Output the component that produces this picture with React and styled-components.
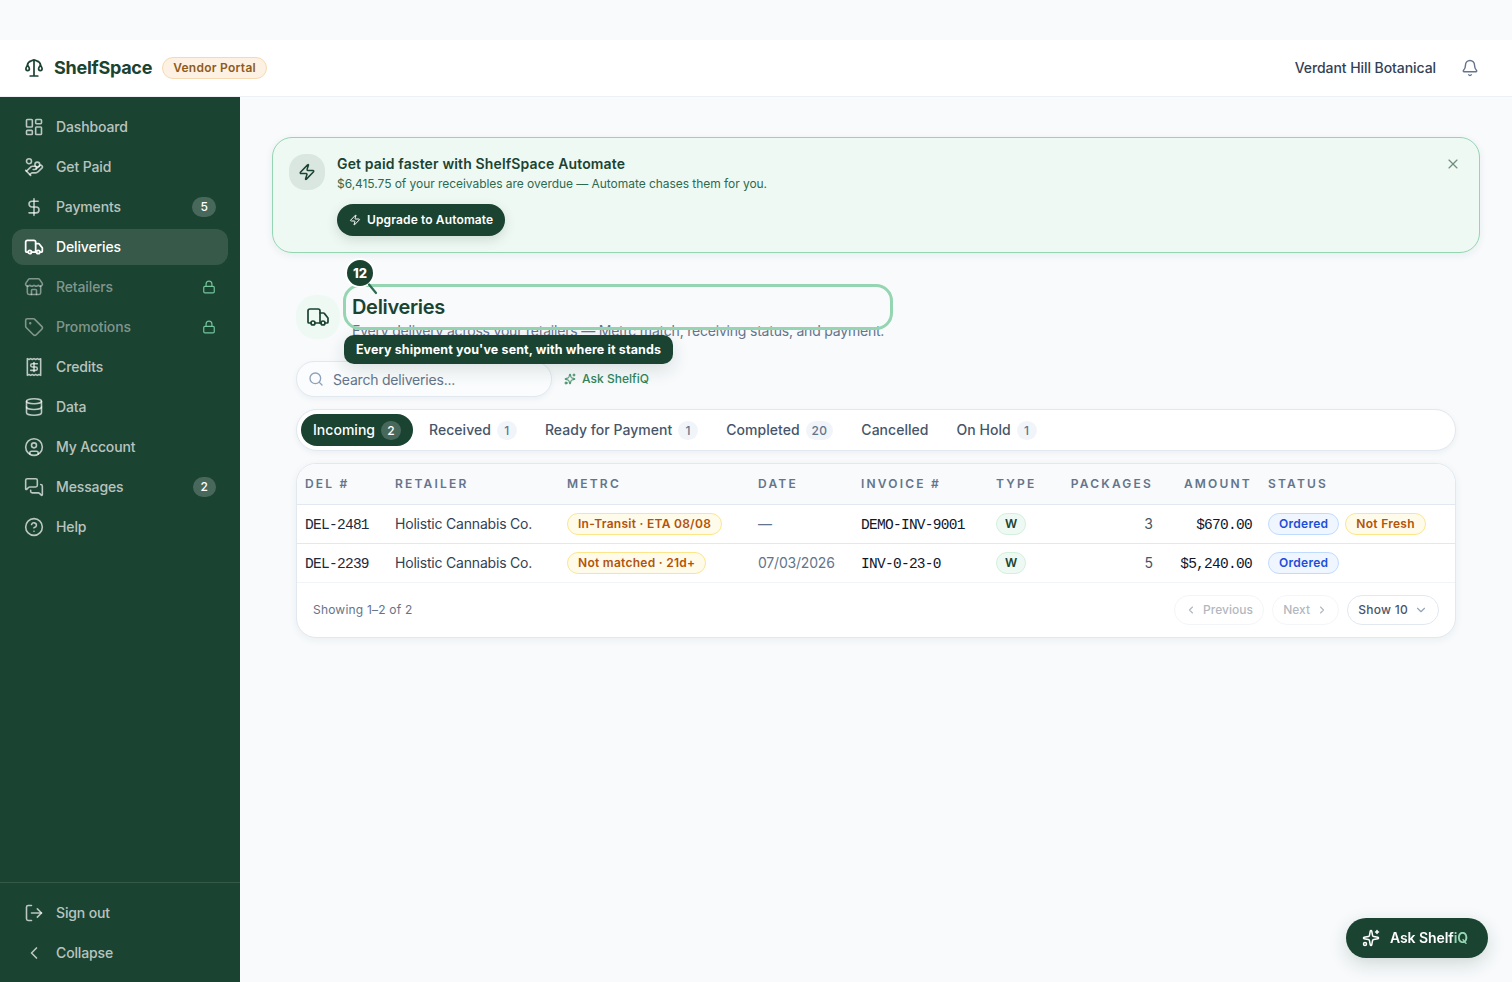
import React from "react";
import styled, { createGlobalStyle, css } from "styled-components";
import {
  LayoutDashboard, HandCoins, DollarSign, Truck, Store, Tag, Receipt, Database,
  CircleUser, MessagesSquare, CircleHelp, LogOut, ChevronLeft, ChevronRight,
  ChevronDown, Lock, Bell, Zap, X, Search, Sparkles,
} from "lucide-react";

const c = {
  forest: "#1b4332",
  green: "#2d6a4f",
  mint: "#95d5b2",
  page: "#f8fafc",
  line: "#e2e8f0",
  slate: "#64748b",
};

const Global = createGlobalStyle`
  *, *::before, *::after { box-sizing: border-box; }
  body { margin: 0; background: ${c.page}; color: #0f172a; font: 14px/20px Inter, sans-serif; }
  button { font: inherit; border: 0; background: none; padding: 0; color: inherit; }
`;

const Shell = styled.div`
  height: 982px;
  padding-top: 40px;
  display: flex;
  flex-direction: column;
  overflow: hidden;
`;

const Header = styled.header`
  height: 57px;
  flex: none;
  display: flex;
  align-items: center;
  justify-content: space-between;
  padding: 0 33px 0 24px;
  background: #fff;
  border-bottom: 1px solid #edf1f5;
`;

const Brand = styled.div`
  display: flex;
  align-items: center;
  gap: 10px;
  color: ${c.forest};
`;

const BrandName = styled.span`
  font-size: 18px;
  font-weight: 700;
  letter-spacing: -0.27px;
  line-height: 28px;
`;

const PortalTag = styled.span`
  height: 22px;
  padding: 0 10px;
  border: 1px solid #f6d9b3;
  border-radius: 11px;
  background: #fdf1e3;
  color: #8f5a1c;
  font-size: 12px;
  font-weight: 600;
  line-height: 20px;
  letter-spacing: 0.27px;
`;

const Account = styled.div`
  display: flex;
  align-items: center;
  gap: 25px;
  color: #334155;
  font-weight: 500;
  letter-spacing: -0.07px;
  svg { color: ${c.slate}; }
`;

const Body = styled.div`
  flex: 1;
  display: flex;
  min-height: 0;
`;

const Sidebar = styled.aside`
  width: 240px;
  flex: none;
  display: flex;
  flex-direction: column;
  justify-content: space-between;
  background: ${c.forest};
`;

const NavGroup = styled.nav`
  display: flex;
  flex-direction: column;
  gap: 4px;
  padding: 12px;
  ${(p) => p.$footer && css`border-top: 1px solid #355848; padding-bottom: 11px;`}
`;

const NavItem = styled.a`
  height: 36px;
  display: flex;
  align-items: center;
  gap: 12px;
  padding: 0 12px;
  border-radius: 12px;
  font-weight: 500;
  letter-spacing: -0.13px;
  color: rgba(255, 255, 255, 0.7);
  ${(p) => p.$locked && css`color: rgba(255, 255, 255, 0.45);`}
  ${(p) => p.$active && css`color: #fff; background: rgba(255, 255, 255, 0.12);`}
`;

const NavLabel = styled.span`
  flex: 1;
`;

const NavCount = styled.span`
  height: 20px;
  padding: 0 8px;
  border-radius: 10px;
  background: rgba(255, 255, 255, 0.2);
  color: #fff;
  font-size: 12px;
  line-height: 20px;
  letter-spacing: 0.1px;
`;

const LockIcon = styled(Lock)`
  color: #74c69d;
`;

const Main = styled.main`
  flex: 1;
  min-width: 0;
  padding: 40px 32px;
`;

const Banner = styled.section`
  display: flex;
  gap: 12px;
  height: 116px;
  padding: 16px;
  border: 1px solid ${c.mint};
  border-radius: 20px;
  background: #eff9f3;
  box-shadow: 0 2px 8px rgba(27, 67, 50, 0.07);
`;

const BannerIcon = styled.div`
  width: 36px;
  height: 36px;
  display: grid;
  place-items: center;
  border-radius: 16px;
  background: #dae7e0;
  color: ${c.forest};
`;

const BannerText = styled.div`
  flex: 1;
`;

const BannerTitle = styled.h2`
  margin: 0;
  font-size: 14px;
  font-weight: 600;
  line-height: 20px;
  letter-spacing: 0.14px;
  color: ${c.forest};
`;

const BannerNote = styled.p`
  margin: 2px 0 12px;
  font-size: 12px;
  line-height: 16px;
  letter-spacing: -0.05px;
  color: ${c.green};
`;

const Upgrade = styled.button`
  display: flex;
  align-items: center;
  gap: 6px;
  height: 32px;
  padding: 0 12px;
  border-radius: 16px;
  background: ${c.forest};
  color: #fff;
  font-size: 12px;
  font-weight: 600;
  letter-spacing: 0.13px;
  box-shadow: 0 4px 12px rgba(27, 67, 50, 0.16);
`;

const Close = styled.button`
  width: 16px;
  height: 16px;
  margin: 2px 2px 0 0;
  color: #718e80;
  svg { display: block; }
`;

const Content = styled.div`
  padding: 42px 24px 0;
  display: flex;
  flex-direction: column;
  gap: 12px;
`;

const PageHead = styled.div`
  position: relative;
  display: flex;
  align-items: center;
  gap: 12px;
  height: 44px;
  margin-bottom: 10px;
`;

const PageIcon = styled.div`
  width: 44px;
  height: 44px;
  display: grid;
  place-items: center;
  border-radius: 20px;
  background: #eff9f3;
  color: ${c.forest};
`;

const PageTitle = styled.h1`
  margin: 0;
  font-size: 20px;
  font-weight: 600;
  line-height: 28px;
  letter-spacing: -0.32px;
  color: ${c.forest};
`;

const PageNote = styled.p`
  margin: 0;
  line-height: 20px;
  letter-spacing: -0.205px;
  color: ${c.slate};
`;

const HeadText = styled.div`
  flex: 1;
`;

const Outline = styled.div`
  position: absolute;
  left: 47px;
  top: -11px;
  width: 550px;
  height: 46px;
  border: 3px solid ${c.mint};
  border-radius: 17px;
`;

const Pointer = styled.svg`
  position: absolute;
  left: 70px;
  top: -13px;
`;

const Step = styled.div`
  position: absolute;
  left: 49px;
  top: -37px;
  width: 30px;
  height: 30px;
  border: 2px solid #fff;
  border-radius: 50%;
  background: ${c.forest};
  color: #fff;
  font-size: 13px;
  font-weight: 800;
  line-height: 26px;
  text-align: center;
`;

const Tip = styled.div`
  position: absolute;
  left: 48px;
  top: 40px;
  width: 329px;
  height: 29px;
  border-radius: 10px;
  background: ${c.forest};
  color: #fff;
  font-size: 12.5px;
  font-weight: 700;
  line-height: 29px;
  letter-spacing: 0.12px;
  text-align: center;
  white-space: nowrap;
  box-shadow: 0 6px 18px rgba(27, 67, 50, 0.14);
`;

const Tools = styled.div`
  display: flex;
  align-items: center;
  gap: 12px;
`;

const SearchBox = styled.label`
  width: 256px;
  height: 36px;
  display: flex;
  align-items: center;
  gap: 9px;
  padding: 1px 11px 0;
  border: 1px solid ${c.line};
  border-radius: 18px;
  background: #fafcfd;
  color: ${c.slate};
  letter-spacing: -0.2px;
  box-shadow: 0 2px 6px rgba(27, 67, 50, 0.05);
  svg { color: #8fa1b8; margin-top: -2px; }
`;

const AskLink = styled.a`
  display: flex;
  align-items: center;
  gap: 6px;
  color: #2f855a;
  font-size: 12px;
  font-weight: 500;
  letter-spacing: 0.02px;
`;

const Tabs = styled.div`
  height: 42px;
  display: flex;
  align-items: center;
  gap: 4px;
  padding: 0 4px;
  border: 1px solid ${c.line};
  border-radius: 21px;
  background: #fff;
  box-shadow: 0 2px 6px rgba(27, 67, 50, 0.05);
`;

const TabCount = styled.span`
  height: 19px;
  min-width: 20px;
  padding: 0 6px;
  border-radius: 10px;
  background: #f1f5f9;
  color: ${c.slate};
  font-size: 12px;
  line-height: 19px;
  letter-spacing: 0.3px;
  text-align: center;
`;

const Tab = styled.button`
  height: 32px;
  display: flex;
  align-items: center;
  gap: 6px;
  padding: 0 12px;
  border-radius: 16px;
  font-weight: 500;
  letter-spacing: 0.03px;
  color: #475569;
  ${(p) => p.$active && css`
    background: ${c.forest};
    color: #fff;
    ${TabCount} { background: rgba(255, 255, 255, 0.2); color: #fff; }
  `}
`;

const Card = styled.section`
  border: 1px solid ${c.line};
  border-radius: 20px;
  background: #fff;
  overflow: hidden;
  box-shadow: 0 2px 8px rgba(27, 67, 50, 0.06);
`;

const Row = styled.div`
  display: grid;
  grid-template-columns: 90px 172px 191px 103px 135px 74px 99px 99px 1fr;
  align-items: center;
  height: 39px;
  border-bottom: 1px solid ${(p) => (p.$last ? "#f1f5f9" : c.line)};
`;

const HeadRow = styled(Row)`
  height: 41px;
  background: ${c.page};
  color: ${c.slate};
  font-size: 12px;
  font-weight: 600;
  letter-spacing: 2.2px;
`;

const Cell = styled.div`
  display: flex;
  gap: 6px;
  padding: 0 8px;
  justify-content: ${(p) => (p.$right ? "flex-end" : "flex-start")};
  white-space: nowrap;
  color: ${(p) => p.$tone || "inherit"};
  ${(p) => p.$tight && css`letter-spacing: -0.2px;`}
  ${(p) => p.$mono && css`
    padding-top: 1px;
    font-family: "Liberation Mono", monospace;
    font-size: 14.5px;
    letter-spacing: -0.72px;
  `}
`;

const tones = {
  amber: ["#fffbeb", "#fde68a", "#b45309"],
  blue: ["#eff6ff", "#bfdbfe", "#1d4ed8"],
  green: ["#eff9f3", "#d3f0dc", "#1b4332"],
};

const Pill = styled.span`
  height: 22px;
  padding: 0 ${(p) => (p.$tight ? 8 : 10)}px;
  border: 1px solid ${(p) => tones[p.$tone][1]};
  border-radius: 11px;
  background: ${(p) => tones[p.$tone][0]};
  color: ${(p) => tones[p.$tone][2]};
  font-size: 12px;
  font-weight: 600;
  line-height: 20px;
  letter-spacing: ${(p) => (p.$tight ? 0.12 : 0.28)}px;
`;

const Footer = styled.div`
  height: 54px;
  display: flex;
  align-items: center;
  justify-content: space-between;
  padding: 0 16px;
  color: ${c.slate};
  font-size: 12px;
  letter-spacing: 0.2px;
`;

const Pager = styled.div`
  display: flex;
  gap: 8px;
`;

const PageButton = styled.button`
  height: 30px;
  display: flex;
  align-items: center;
  gap: 6px;
  padding: 0 10px;
  border: 1px solid ${c.line};
  border-radius: 15px;
  color: #475569;
  font-weight: 500;
  letter-spacing: ${(p) => (p.$off ? 0.05 : 0.27)}px;
  opacity: ${(p) => (p.$off ? 0.42 : 1)};
`;

const AskButton = styled.button`
  position: fixed;
  right: 24px;
  bottom: 24px;
  width: 142px;
  height: 40px;
  display: flex;
  align-items: center;
  gap: 10px;
  padding: 0 16px;
  border-radius: 20px;
  background: ${c.forest};
  color: #fff;
  font-weight: 600;
  letter-spacing: -0.08px;
  box-shadow: 0 6px 18px rgba(27, 67, 50, 0.18);
  em { font-style: normal; color: ${c.mint}; }
`;

const ScaleMark = () => (
  <svg width="20" height="20" viewBox="0 0 20 20" fill="none" stroke="currentColor" strokeWidth="1.7" strokeLinecap="round" strokeLinejoin="round">
    <path d="M10 2v16M6.2 18h7.6M3.4 7.2C3.7 4.5 5.6 3.4 7.2 2.9 8.2 2.5 9.2 1.9 10 1.9s1.8.6 2.8 1c1.6.5 3.5 1.6 3.8 4.3" />
    <path d="M3.600 7.200C2.500 8.600 1.900 9.800 1.900 10.800a1.750 1.750 0 0 0 3.500 0C5.400 9.800 4.700 8.600 3.600 7.200ZM16.400 7.200c-1.100 1.400-1.800 2.600-1.800 3.600a1.750 1.750 0 0 0 3.500 0c0-1-.6-2.200-1.700-3.600Z" />
  </svg>
);

const nav = [
  { icon: LayoutDashboard, label: "Dashboard" },
  { icon: HandCoins, label: "Get Paid" },
  { icon: DollarSign, label: "Payments", count: 5 },
  { icon: Truck, label: "Deliveries", active: true },
  { icon: Store, label: "Retailers", locked: true },
  { icon: Tag, label: "Promotions", locked: true },
  { icon: Receipt, label: "Credits" },
  { icon: Database, label: "Data" },
  { icon: CircleUser, label: "My Account" },
  { icon: MessagesSquare, label: "Messages", count: 2 },
  { icon: CircleHelp, label: "Help" },
];

const tabs = [
  ["Incoming", 2], ["Received", 1], ["Ready for Payment", 1],
  ["Completed", 20], ["Cancelled", null], ["On Hold", 1],
];

const rows = [
  { id: "DEL-2481", metrc: "In-Transit · ETA 08/08", date: "—", invoice: "DEMO-INV-9001", packages: 3, amount: "$670.00", stale: true },
  { id: "DEL-2239", metrc: "Not matched · 21d+", date: "07/03/2026", invoice: "INV-0-23-0", packages: 5, amount: "$5,240.00" },
];

export default function App() {
  return (
    <Shell>
      <Global />
      <Header>
        <Brand>
          <ScaleMark />
          <BrandName>ShelfSpace</BrandName>
          <PortalTag>Vendor Portal</PortalTag>
        </Brand>
        <Account>
          <span>Verdant Hill Botanical</span>
          <Bell size={18} strokeWidth={1.9} />
        </Account>
      </Header>
      <Body>
        <Sidebar>
          <NavGroup>
            {nav.map(({ icon: Icon, label, count, active, locked }) => (
              <NavItem key={label} $active={active} $locked={locked}>
                <Icon size={20} strokeWidth={active ? 2.1 : 1.9} />
                <NavLabel>{label}</NavLabel>
                {count && <NavCount>{count}</NavCount>}
                {locked && <LockIcon size={14} strokeWidth={2} />}
              </NavItem>
            ))}
          </NavGroup>
          <NavGroup $footer>
            <NavItem><LogOut size={20} strokeWidth={1.9} /><NavLabel>Sign out</NavLabel></NavItem>
            <NavItem><ChevronLeft size={20} strokeWidth={2} /><NavLabel>Collapse</NavLabel></NavItem>
          </NavGroup>
        </Sidebar>
        <Main>
          <Banner>
            <BannerIcon><Zap size={18} strokeWidth={2} /></BannerIcon>
            <BannerText>
              <BannerTitle>Get paid faster with ShelfSpace Automate</BannerTitle>
              <BannerNote>$6,415.75 of your receivables are overdue — Automate chases them for you.</BannerNote>
              <Upgrade><Zap size={12} strokeWidth={2} />Upgrade to Automate</Upgrade>
            </BannerText>
            <Close><X size={16} strokeWidth={1.75} /></Close>
          </Banner>
          <Content>
            <PageHead>
              <PageIcon><Truck size={24} strokeWidth={1.7} /></PageIcon>
              <HeadText>
                <PageTitle>Deliveries</PageTitle>
                <PageNote>Every delivery across your retailers — Metrc match, receiving status, and payment.</PageNote>
              </HeadText>
              <Outline />
              <Step>12</Step>
              <Pointer width="14" height="14" viewBox="0 0 14 14"><path d="M3 2.5 10 11" stroke={c.green} strokeWidth="2.2" strokeLinecap="round" /></Pointer>
              <Tip>Every shipment you've sent, with where it stands</Tip>
            </PageHead>
            <Tools>
              <SearchBox><Search size={16} strokeWidth={2} />Search deliveries...</SearchBox>
              <AskLink><Sparkles size={12} strokeWidth={2} />Ask ShelfiQ</AskLink>
            </Tools>
            <Tabs>
              {tabs.map(([label, count], i) => (
                <Tab key={label} $active={i === 0}>
                  {label}{count && <TabCount>{count}</TabCount>}
                </Tab>
              ))}
            </Tabs>
            <Card>
              <HeadRow>
                <Cell>DEL #</Cell><Cell>RETAILER</Cell><Cell>METRC</Cell><Cell>DATE</Cell>
                <Cell>INVOICE #</Cell><Cell>TYPE</Cell><Cell $right>PACKAGES</Cell>
                <Cell $right>AMOUNT</Cell><Cell>STATUS</Cell>
              </HeadRow>
              {rows.map((r, i) => (
                <Row key={r.id} $last={i === rows.length - 1}>
                  <Cell $mono $tone="#1e293b">{r.id}</Cell>
                  <Cell $tight $tone="#334155">Holistic Cannabis Co.</Cell>
                  <Cell><Pill $tone="amber">{r.metrc}</Pill></Cell>
                  <Cell $tight $tone={c.slate}>{r.date}</Cell>
                  <Cell $mono>{r.invoice}</Cell>
                  <Cell><Pill $tone="green" $tight>W</Pill></Cell>
                  <Cell $right $tone="#475569">{r.packages}</Cell>
                  <Cell $mono $right>{r.amount}</Cell>
                  <Cell>
                    <Pill $tone="blue">Ordered</Pill>
                    {r.stale && <Pill $tone="amber">Not Fresh</Pill>}
                  </Cell>
                </Row>
              ))}
              <Footer>
                <span>Showing 1–2 of 2</span>
                <Pager>
                  <PageButton $off><ChevronLeft size={12} strokeWidth={2.3} />Previous</PageButton>
                  <PageButton $off>Next<ChevronRight size={12} strokeWidth={2.3} /></PageButton>
                  <PageButton>Show 10<ChevronDown size={14} color="#94a3b8" /></PageButton>
                </Pager>
              </Footer>
            </Card>
          </Content>
        </Main>
      </Body>
      <AskButton><Sparkles size={18} strokeWidth={2} /><span>Ask Shelf<em>iQ</em></span></AskButton>
    </Shell>
  );
}
